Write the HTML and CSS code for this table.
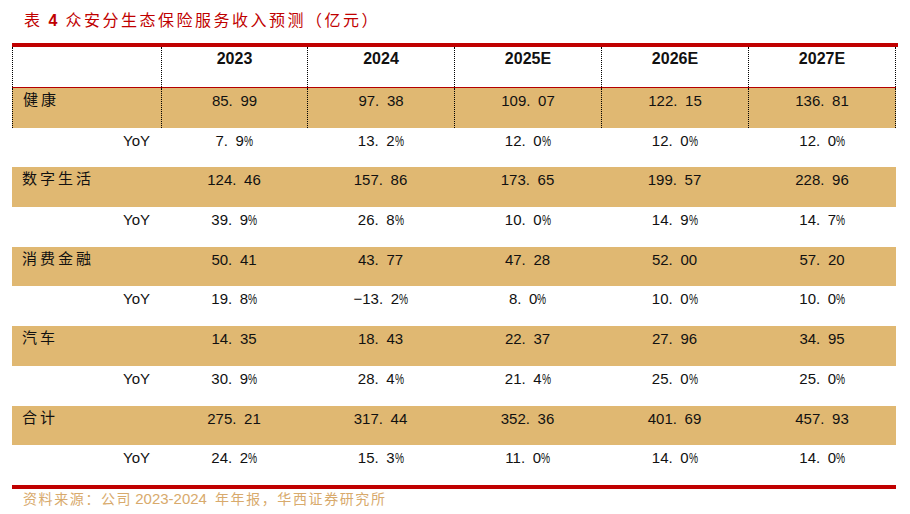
FILE: index.html
```html
<!DOCTYPE html>
<html lang="zh-CN">
<head>
<meta charset="utf-8">
<title>众安分生态保险服务收入预测</title>
<link rel="stylesheet" href="styles.css">
</head>
<body>
<div class="page">
  <div class="title"><span class="t-cn">表</span><span class="t-num">4</span><span class="t-cn">众安分生态保险服务收入预测（亿元）</span></div>
  <div class="topbar"></div>
  <div class="table">
    <div class="row head dotted">
      <div class="cell"></div>
      <div class="cell">2023</div>
      <div class="cell">2024</div>
      <div class="cell">2025E</div>
      <div class="cell">2026E</div>
      <div class="cell">2027E</div>
    </div>
    <div class="row tan dotted">
      <div class="cell label">健康</div>
      <div class="cell num">85<span class="dp">.</span>99</div>
      <div class="cell num">97<span class="dp">.</span>38</div>
      <div class="cell num">109<span class="dp">.</span>07</div>
      <div class="cell num">122<span class="dp">.</span>15</div>
      <div class="cell num">136<span class="dp">.</span>81</div>
    </div>
    <div class="row">
      <div class="cell yoy">YoY</div>
      <div class="cell num">7<span class="dp">.</span>9<span class="pc">%</span></div>
      <div class="cell num">13<span class="dp">.</span>2<span class="pc">%</span></div>
      <div class="cell num">12<span class="dp">.</span>0<span class="pc">%</span></div>
      <div class="cell num">12<span class="dp">.</span>0<span class="pc">%</span></div>
      <div class="cell num">12<span class="dp">.</span>0<span class="pc">%</span></div>
    </div>
    <div class="row tan">
      <div class="cell label">数字生活</div>
      <div class="cell num">124<span class="dp">.</span>46</div>
      <div class="cell num">157<span class="dp">.</span>86</div>
      <div class="cell num">173<span class="dp">.</span>65</div>
      <div class="cell num">199<span class="dp">.</span>57</div>
      <div class="cell num">228<span class="dp">.</span>96</div>
    </div>
    <div class="row">
      <div class="cell yoy">YoY</div>
      <div class="cell num">39<span class="dp">.</span>9<span class="pc">%</span></div>
      <div class="cell num">26<span class="dp">.</span>8<span class="pc">%</span></div>
      <div class="cell num">10<span class="dp">.</span>0<span class="pc">%</span></div>
      <div class="cell num">14<span class="dp">.</span>9<span class="pc">%</span></div>
      <div class="cell num">14<span class="dp">.</span>7<span class="pc">%</span></div>
    </div>
    <div class="row tan">
      <div class="cell label">消费金融</div>
      <div class="cell num">50<span class="dp">.</span>41</div>
      <div class="cell num">43<span class="dp">.</span>77</div>
      <div class="cell num">47<span class="dp">.</span>28</div>
      <div class="cell num">52<span class="dp">.</span>00</div>
      <div class="cell num">57<span class="dp">.</span>20</div>
    </div>
    <div class="row">
      <div class="cell yoy">YoY</div>
      <div class="cell num">19<span class="dp">.</span>8<span class="pc">%</span></div>
      <div class="cell num">−13<span class="dp">.</span>2<span class="pc">%</span></div>
      <div class="cell num">8<span class="dp">.</span>0<span class="pc">%</span></div>
      <div class="cell num">10<span class="dp">.</span>0<span class="pc">%</span></div>
      <div class="cell num">10<span class="dp">.</span>0<span class="pc">%</span></div>
    </div>
    <div class="row tan">
      <div class="cell label">汽车</div>
      <div class="cell num">14<span class="dp">.</span>35</div>
      <div class="cell num">18<span class="dp">.</span>43</div>
      <div class="cell num">22<span class="dp">.</span>37</div>
      <div class="cell num">27<span class="dp">.</span>96</div>
      <div class="cell num">34<span class="dp">.</span>95</div>
    </div>
    <div class="row">
      <div class="cell yoy">YoY</div>
      <div class="cell num">30<span class="dp">.</span>9<span class="pc">%</span></div>
      <div class="cell num">28<span class="dp">.</span>4<span class="pc">%</span></div>
      <div class="cell num">21<span class="dp">.</span>4<span class="pc">%</span></div>
      <div class="cell num">25<span class="dp">.</span>0<span class="pc">%</span></div>
      <div class="cell num">25<span class="dp">.</span>0<span class="pc">%</span></div>
    </div>
    <div class="row tan">
      <div class="cell label">合计</div>
      <div class="cell num">275<span class="dp">.</span>21</div>
      <div class="cell num">317<span class="dp">.</span>44</div>
      <div class="cell num">352<span class="dp">.</span>36</div>
      <div class="cell num">401<span class="dp">.</span>69</div>
      <div class="cell num">457<span class="dp">.</span>93</div>
    </div>
    <div class="row">
      <div class="cell yoy">YoY</div>
      <div class="cell num">24<span class="dp">.</span>2<span class="pc">%</span></div>
      <div class="cell num">15<span class="dp">.</span>3<span class="pc">%</span></div>
      <div class="cell num">11<span class="dp">.</span>0<span class="pc">%</span></div>
      <div class="cell num">14<span class="dp">.</span>0<span class="pc">%</span></div>
      <div class="cell num">14<span class="dp">.</span>0<span class="pc">%</span></div>
    </div>
  </div>
  <div class="source"><span class="s-cn">资料来源：公司</span><span class="s-num">2023-2024</span><span class="s-cn">年年报，华西证券研究所</span></div>
</div>
</body>
</html>
```

FILE: styles.css
```css
* { box-sizing: border-box; }

html, body {
  margin: 0;
  padding: 0;
  background: #ffffff;
}

body {
  font-family: "Liberation Sans", Arial, "Noto Sans CJK SC", sans-serif;
  color: #111111;
}

.page {
  width: 910px;
  height: 514px;
  overflow: hidden;
}

.title {
  margin: 9px 0 0 24px;
  height: 20px;
  line-height: 20px;
  color: #c00000;
  display: flex;
  align-items: baseline;
}

.t-cn {
  font-family: "Noto Sans CJK SC", sans-serif;
  font-size: 16px;
  letter-spacing: 2.5px;
}

.t-num {
  font-family: "Liberation Sans", sans-serif;
  font-weight: bold;
  font-size: 16px;
  margin: 0 8px 0 6px;
}

.topbar {
  margin: 14px 0 0 12px;
  width: 886px;
  height: 4px;
  background: #c00000;
}

.table {
  margin-left: 12px;
  width: 884px;
  border-bottom: 4px solid #c00000;
}

.row {
  display: grid;
  grid-template-columns: 149px 146px 147px 147px 147px 148px;
  height: 39.7px;
}

.row.head {
  height: 41px;
  border-bottom: 1px solid #b40000;
}

.row.tan {
  background: #e0b872;
}

.cell {
  padding-top: 3px;
  font-size: 15px;
  line-height: 20px;
  text-align: center;
  white-space: nowrap;
}

.row.dotted .cell {
  border-left: 1px dotted #000000;
}

.row.dotted .cell:last-child {
  border-right: 1px dotted #000000;
}

.row.head .cell {
  font-size: 16px;
  font-weight: bold;
  padding-top: 2px;
}

.cell.label {
  text-align: left;
  padding-left: 10px;
  padding-top: 1px;
  font-family: "Noto Sans CJK SC", sans-serif;
  letter-spacing: 3px;
}

.cell.yoy {
  text-align: right;
  padding-right: 11px;
}

.dp {
  margin-right: 7.6px;
}

.pc {
  display: inline-block;
  width: 8.6px;
  transform: scaleX(0.68);
  transform-origin: left center;
}

.source {
  margin: 1px 0 0 23px;
  line-height: 16px;
  color: #d8aa6c;
  display: flex;
  align-items: baseline;
}

.s-cn {
  font-family: "Noto Sans CJK SC", sans-serif;
  font-size: 14px;
  letter-spacing: 1.6px;
}

.s-num {
  font-family: "Liberation Sans", sans-serif;
  font-size: 15px;
  margin: 0 8px 0 3px;
}
```
